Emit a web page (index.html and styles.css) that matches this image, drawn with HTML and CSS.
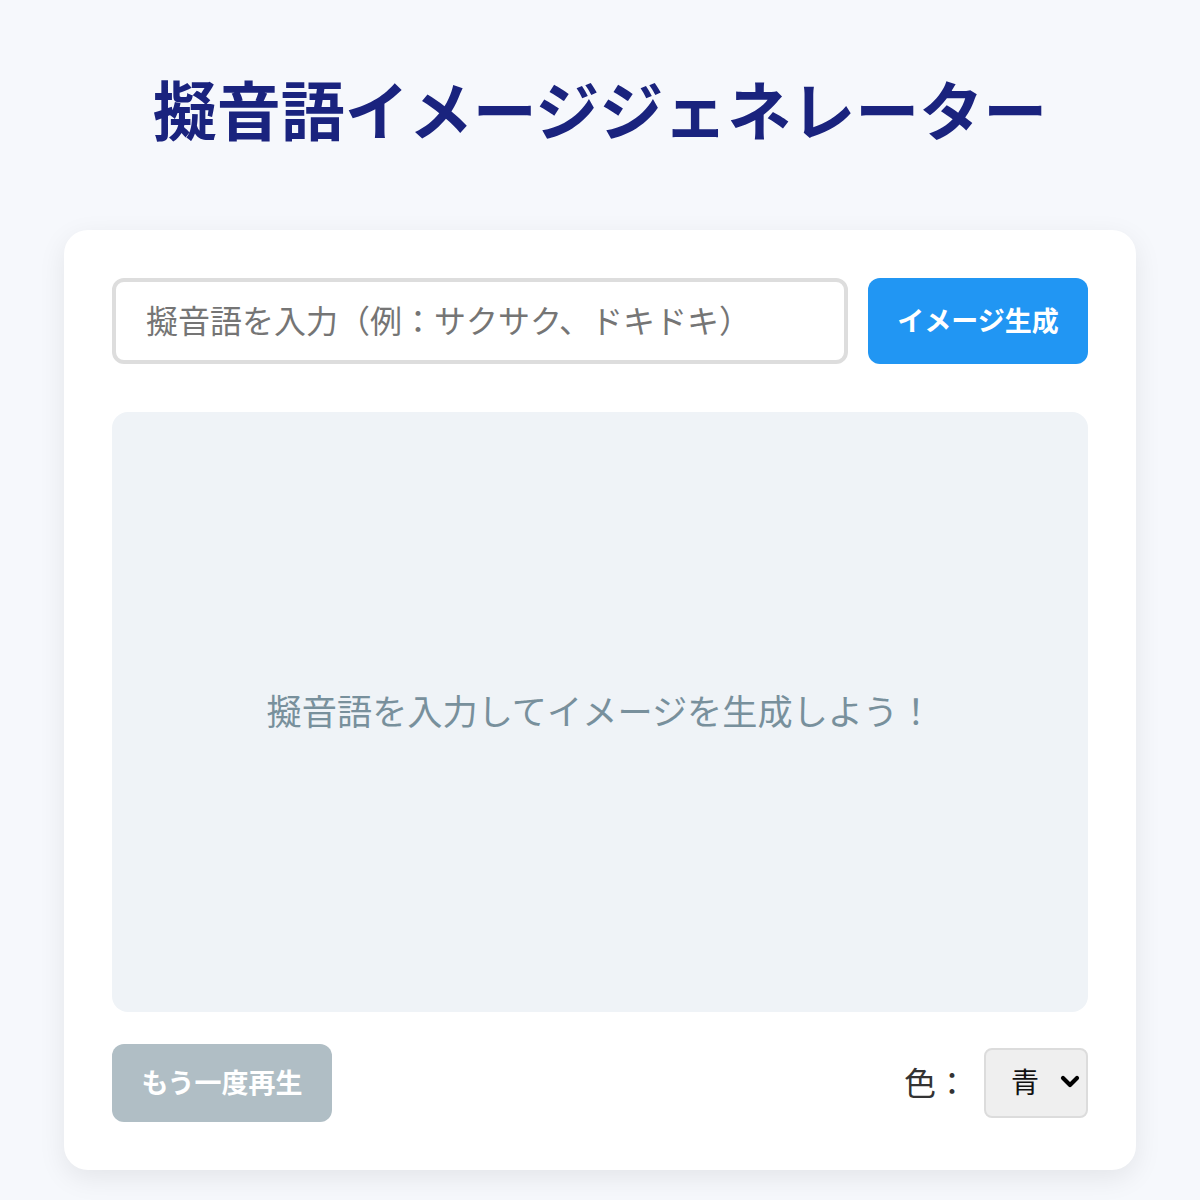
FILE: index.html
```html
<!DOCTYPE html>
<html lang="ja">
<head>
<meta charset="utf-8">
<title>擬音語イメージジェネレーター</title>
<link rel="stylesheet" href="styles.css">
</head>
<body>
<h1 class="title">擬音語イメージジェネレーター</h1>
<main class="card">
  <div class="input-row">
    <input class="word-input" type="text" placeholder="擬音語を入力（例：サクサク、ドキドキ）">
    <button class="btn btn-primary">イメージ生成</button>
  </div>
  <div class="display">
    <p class="display-text">擬音語を入力してイメージを生成しよう！</p>
  </div>
  <div class="controls">
    <button class="btn btn-replay">もう一度再生</button>
    <div class="color-picker">
      <label class="color-label" for="color">色：</label>
      <span class="select-wrap">
        <select id="color" class="color-select">
          <option>青</option>
          <option>赤</option>
          <option>緑</option>
        </select>
        <svg class="chevron" width="20" height="14" viewBox="0 0 20 14"><path d="M3 3 L10 10 L17 3" fill="none" stroke="#000" stroke-width="4.2" stroke-linecap="round" stroke-linejoin="round"/></svg>
      </span>
    </div>
  </div>
</main>
</body>
</html>
```

FILE: styles.css
```css
* { box-sizing: border-box; }
html, body { margin: 0; padding: 0; }
body {
  background: #f6f8fc;
  font-family: "Noto Sans CJK JP", "Noto Sans", sans-serif;
  color: #333;
  min-height: 1200px;
  padding-bottom: 1px;
}
.title {
  margin: 60px 0 76px;
  text-align: center;
  font-size: 64px;
  line-height: 94px;
  font-weight: 700;
  color: #1a237e;
}
.card {
  width: 1072px;
  margin: 0 auto;
  background: #fff;
  border-radius: 24px;
  padding: 48px;
  box-shadow: 0 8px 28px rgba(0, 0, 0, 0.08);
}
.input-row {
  display: flex;
  gap: 20px;
  height: 86px;
}
.word-input {
  flex: 1;
  height: 86px;
  border: 4px solid #dddddd;
  border-radius: 12px;
  padding: 0 0 4px 30px;
  font-family: inherit;
  font-size: 32px;
  color: #333;
  outline: none;
  background: #fff;
}
.word-input::placeholder { color: #757575; }
.btn {
  border: none;
  border-radius: 12px;
  color: #fff;
  font-family: inherit;
  font-weight: 700;
  font-size: 27px;
  cursor: pointer;
  padding: 0 0 3px;
}
.btn-primary {
  width: 220px;
  height: 86px;
  background: #2196f3;
}
.display {
  margin-top: 48px;
  height: 600px;
  background: #eff3f7;
  border-radius: 16px;
  display: flex;
  align-items: center;
  justify-content: center;
  padding-bottom: 6px;
}
.display-text {
  margin: 0;
  font-size: 35.2px;
  color: #78909c;
}
.controls {
  margin-top: 32px;
  display: flex;
  justify-content: space-between;
  align-items: center;
}
.btn-replay {
  width: 220px;
  height: 78px;
  background: #b0bec5;
}
.color-picker {
  display: flex;
  align-items: center;
  gap: 16px;
}
.color-label {
  font-size: 32px;
  color: #333;
  padding-bottom: 4px;
}
.select-wrap {
  position: relative;
  display: inline-block;
}
.color-select {
  appearance: none;
  -webkit-appearance: none;
  width: 104px;
  height: 70px;
  background: #efefef;
  border: 2px solid #dcdcdc;
  border-radius: 8px;
  padding: 0 0 4px 25px;
  font-family: inherit;
  font-size: 28px;
  color: #111;
  outline: none;
}
.chevron {
  position: absolute;
  right: 8px;
  top: 27px;
  pointer-events: none;
}
```
